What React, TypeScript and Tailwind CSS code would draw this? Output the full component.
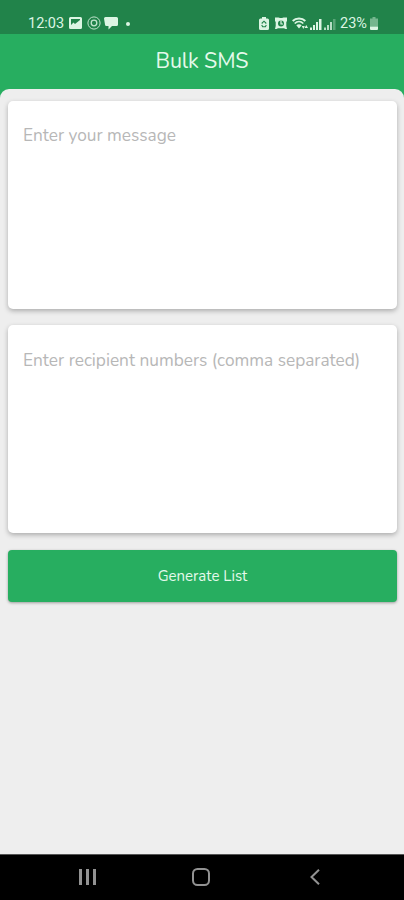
import { useState } from "react";

function StatusBar() {
  return (
    <div className="h-[33.5px] shrink-0 bg-[#21834a] pt-[13px] pl-7 pr-[26px] flex justify-between text-[#dcf5e3]">
      <div className="flex items-center h-[21px]">
        <span className="w-[37px] mr-1 pt-0.5 font-['Roboto'] text-[14.5px] leading-none whitespace-nowrap">12:03</span>
        <svg className="w-[13px] h-3 mr-[5px] -mt-0.5" viewBox="0 0 13 12">
          <path fillRule="evenodd" fill="currentColor" d="M1.5 0h10A1.5 1.5 0 0 1 13 1.5v9a1.5 1.5 0 0 1-1.5 1.5h-10A1.5 1.5 0 0 1 0 10.5v-9A1.5 1.5 0 0 1 1.5 0ZM2 2v6l2.5-2.5L6 7l5-4V2Z" />
        </svg>
        <svg className="w-[14px] h-[14px] mr-[3px] -mt-0.5" viewBox="0 0 14 14" fill="none" stroke="currentColor" opacity=".85">
          <circle cx="7" cy="7" r="6.1" />
          <circle cx="7" cy="7" r="2.8" strokeWidth="1.3" />
        </svg>
        <svg className="w-[14px] h-[13px] mr-[8px]" viewBox="0 0 14 13" fill="currentColor">
          <path d="M1.5 0h11A1.5 1.5 0 0 1 14 1.5v6A1.5 1.5 0 0 1 12.5 9H8l-3.5 3.5V9h-2A1.5 1.5 0 0 1 1 7.5l-1-6A1.5 1.5 0 0 1 1.5 0Z" />
        </svg>
        <span className="size-1 rounded-full bg-current" />
      </div>

      <div className="flex items-center h-[21px]">
        <svg className="w-[10px] h-[13px] mr-[6px]" viewBox="0 0 10 13">
          <path fill="currentColor" d="M3 0h4v1.500h1.500A1.500 1.500 0 0 1 10 3v8.500A1.500 1.500 0 0 1 8.500 13h-7A1.500 1.500 0 0 1 0 11.500V3a1.500 1.500 0 0 1 1.500-1.500H3Z" />
          <path fill="none" stroke="#21834a" strokeWidth="1.1" d="M2.7 6.500 5 4.200l2.300 2.300M2.700 8l1 1.800h2.700L7.300 8" />
        </svg>
        <svg className="w-3 h-[13px] mr-[5px]" viewBox="0 0 12 13">
          <path fill="currentColor" d="M0 .5h3.500L5 1h2L8.500.5H12V4l-.7 1v4l.7 3h-1.500L9 11.300H3L1.500 12H0l.7-3V5L0 4Z" />
          <circle cx="6" cy="6.5" r="3" fill="#21834a" />
          <path fill="none" stroke="currentColor" strokeWidth="1.2" d="M6 3.500V7h2" />
        </svg>
        <svg className="w-4 h-[13px] mr-[2px]" viewBox="0 0 16 13" fill="none" stroke="currentColor">
          <path strokeWidth="2" d="M.7 4C4 .6 10 .6 13.3 4" />
          <path strokeWidth="1.7" d="M2.7 6.500c2.500-2.500 6.100-2.500 8.600 0" />
          <path fill="currentColor" stroke="none" d="M4.3 8.300c1.700-1.500 3.700-1.500 5.400 0L7 11.500ZM9.800 9h3l-1.500 3ZM12.500 11 14.300 8l1.700 3Z" />
        </svg>
        <svg className="w-3 h-3 mr-[2px]" viewBox="0 0 12 12" fill="currentColor">
          <path d="M0 9.500h2V12H0ZM3 7h2v5H3ZM6 4h2v8H6ZM9 1h2.500v11H9Z" />
        </svg>
        <svg className="w-3 h-3 mr-[4px]" viewBox="0 0 12 12" fill="currentColor">
          <path opacity=".8" d="M0 9.500h2V12H0ZM3 7h2v5H3ZM6 4h2v8H6Z" />
          <path opacity=".3" d="M9 1h2.500v11H9Z" />
        </svg>
        <span className="w-[28px] mr-[2px] pt-0.5 font-['Roboto'] text-[14.5px] leading-none whitespace-nowrap">23%</span>
        <svg className="w-2 h-[13px]" viewBox="0 0 8 13" fill="currentColor">
          <path opacity=".45" d="M2.500 0h3v1.500H8v8H0v-8h2.500Z" />
          <path d="M0 9.500h8V12a1 1 0 0 1-1 1H1a1 1 0 0 1-1-1Z" />
        </svg>
      </div>
    </div>
  );
}

function NavigationBar() {
  return (
    <nav className="h-[46px] shrink-0 bg-black border-t border-[#555] pl-[79px] pr-[84px] pb-px flex items-center justify-between text-[#929292]">
      <button aria-label="Recent apps" className="w-[17px] mr-[-5px] h-4 flex justify-between">
        <span className="w-[3px] bg-current" />
        <span className="w-[3px] bg-current" />
        <span className="w-[3px] bg-current" />
      </button>
      <button aria-label="Home" className="size-[18px] rounded-[5.5px] border-2 border-current" />
      <button aria-label="Back">
        <svg className="w-[10px] h-4" viewBox="0 0 10 16" fill="none" stroke="currentColor" strokeWidth="2">
          <path d="M9 .8 1.500 8 9 15.200" />
        </svg>
      </button>
    </nav>
  );
}

export default function App() {
  const [message, setMessage] = useState("");
  const [numbers, setNumbers] = useState("");

  return (
    <div className="h-[900px] w-full flex flex-col overflow-hidden bg-[#27ae60] font-['Nunito','Open_Sans',sans-serif]">
      <StatusBar />
      <header className="h-[55px] shrink-0 flex items-center justify-center text-[#e4f9eb]">
        <h1 className="text-[21.5px] tracking-[-0.15px]">Bulk SMS</h1>
      </header>

      <main className="flex-1 flex flex-col rounded-t-[9px] bg-[#eeeeee] pt-3 pl-2 pr-[7px]">
        <textarea
          value={message}
          onChange={(e) => setMessage(e.target.value)}
          placeholder="Enter your message"
          className="block h-[208px] w-full resize-none rounded-[5px] bg-white px-[15px] pt-[23px] text-[17.3px] leading-6 tracking-[-0.03px] text-gray-700 placeholder:text-[#b7b7b7] shadow-[0_2px_5px_rgba(0,0,0,0.28)] outline-none"
        />
        <textarea
          value={numbers}
          onChange={(e) => setNumbers(e.target.value)}
          placeholder="Enter recipient numbers (comma separated)"
          className="mt-4 block h-[208px] w-full resize-none rounded-[5px] bg-white px-[15px] pt-[24px] text-[17.3px] leading-6 tracking-[-0.01px] text-gray-700 placeholder:text-[#b7b7b7] shadow-[0_2px_5px_rgba(0,0,0,0.28)] outline-none"
        />
        <button className="mt-[17px] h-[52px] pt-0.5 rounded-[4px] bg-[#27ae60] text-[15px] text-[#e4f9eb] shadow-[0_1px_3px_rgba(0,0,0,0.35)]">
          Generate List
        </button>
      </main>
      <NavigationBar />
    </div>
  );
}
